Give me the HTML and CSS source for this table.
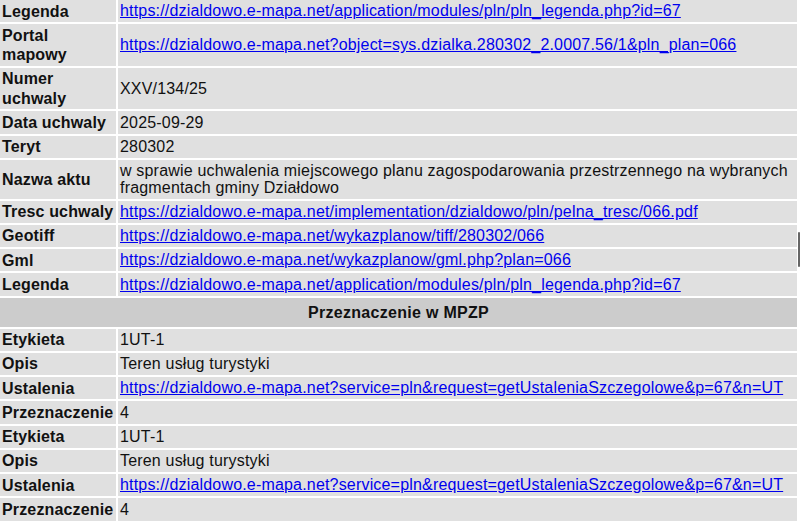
FILE: index.html
```html
<!DOCTYPE html>
<html lang="pl">
<head>
<meta charset="utf-8">
<title>Plan</title>
<link rel="stylesheet" href="styles.css">
</head>
<body>
<table class="info">
  <tr><td class="label">Legenda</td><td class="value"><a href="#">https://dzialdowo.e-mapa.net/application/modules/pln/pln_legenda.php?id=67</a></td></tr>
  <tr><td class="label">Portal mapowy</td><td class="value"><a href="#">https://dzialdowo.e-mapa.net?object=sys.dzialka.280302_2.0007.56/1&amp;pln_plan=066</a></td></tr>
  <tr><td class="label">Numer uchwaly</td><td class="value">XXV/134/25</td></tr>
  <tr><td class="label">Data uchwaly</td><td class="value">2025-09-29</td></tr>
  <tr><td class="label">Teryt</td><td class="value">280302</td></tr>
  <tr><td class="label">Nazwa aktu</td><td class="value">w sprawie uchwalenia miejscowego planu zagospodarowania przestrzennego na wybranych fragmentach gminy Działdowo</td></tr>
  <tr><td class="label">Tresc uchwaly</td><td class="value"><a href="#">https://dzialdowo.e-mapa.net/implementation/dzialdowo/pln/pelna_tresc/066.pdf</a></td></tr>
  <tr><td class="label">Geotiff</td><td class="value"><a href="#">https://dzialdowo.e-mapa.net/wykazplanow/tiff/280302/066</a></td></tr>
  <tr><td class="label">Gml</td><td class="value"><a href="#">https://dzialdowo.e-mapa.net/wykazplanow/gml.php?plan=066</a></td></tr>
  <tr><td class="label">Legenda</td><td class="value"><a href="#">https://dzialdowo.e-mapa.net/application/modules/pln/pln_legenda.php?id=67</a></td></tr>
  <tr><th class="section" colspan="2">Przeznaczenie w MPZP</th></tr>
  <tr><td class="label">Etykieta</td><td class="value">1UT-1</td></tr>
  <tr><td class="label">Opis</td><td class="value">Teren usług turystyki</td></tr>
  <tr><td class="label">Ustalenia</td><td class="value"><a href="#">https://dzialdowo.e-mapa.net?service=pln&amp;request=getUstaleniaSzczegolowe&amp;p=67&amp;n=UT</a></td></tr>
  <tr><td class="label">Przeznaczenie</td><td class="value">4</td></tr>
  <tr><td class="label">Etykieta</td><td class="value">1UT-1</td></tr>
  <tr><td class="label">Opis</td><td class="value">Teren usług turystyki</td></tr>
  <tr><td class="label">Ustalenia</td><td class="value"><a href="#">https://dzialdowo.e-mapa.net?service=pln&amp;request=getUstaleniaSzczegolowe&amp;p=67&amp;n=UT</a></td></tr>
  <tr><td class="label">Przeznaczenie</td><td class="value">4</td></tr>
</table>
<div class="scroll-thumb"></div>
</body>
</html>
```
FILE: styles.css
```css
html, body {
  margin: 0;
  padding: 0;
  background: #ffffff;
}
body {
  font-family: "Liberation Sans", Arial, Helvetica, sans-serif;
  font-size: 16px;
  color: #111;
  overflow: hidden;
}
.info {
  border-spacing: 2px;
  border-collapse: separate;
  margin: -2px 0 0 -2px;
  width: 801px;
}
.info td {
  background: #e0e0e0;
  vertical-align: middle;
}
.info td.label {
  font-weight: bold;
  width: 112px;
  text-align: left;
  padding: 1.5px 2px;
  line-height: 19.25px;
  letter-spacing: 0.15px;
}
.info td.value {
  padding: 2px;
  line-height: 17.4px;
  letter-spacing: 0.18px;
}
.info a {
  color: #0000ee;
  text-decoration: underline;
}
.info th.section {
  background: #cccccc;
  font-weight: bold;
  text-align: center;
  padding: 5px;
  line-height: 19px;
  letter-spacing: 0.3px;
}
.scroll-thumb {
  position: fixed;
  right: 0;
  top: 232px;
  width: 2px;
  height: 35px;
  background: #666;
  border-radius: 1px;
}
```
